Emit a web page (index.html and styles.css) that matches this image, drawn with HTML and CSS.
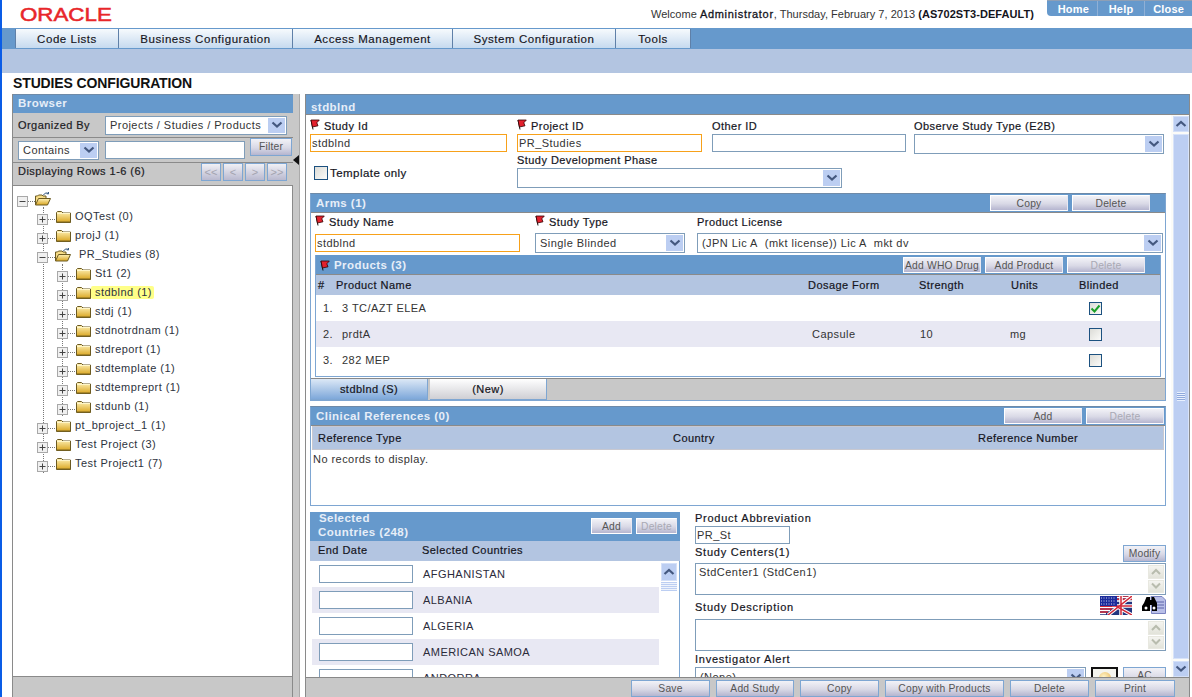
FILE: index.html
```html
<!DOCTYPE html>
<html lang="en">
<head>
<meta charset="utf-8">
<title>Studies Configuration</title>
<link rel="stylesheet" href="styles.css">
</head>
<body>
<svg class="defs" width="0" height="0" aria-hidden="true">
  <defs>
    <linearGradient id="fold" x1="0" y1="0" x2="0" y2="1"><stop offset="0" stop-color="#fff2b8"/><stop offset="1" stop-color="#d9a520"/></linearGradient>
    <symbol id="folder" viewBox="0 0 15 12"><path d="M.5 11.500V1.500l1-1h4l1.500 1.500h7.500v9.500z" fill="url(#fold)" stroke="#6b5a22"/><path d="M1 2.500h13" stroke="#fff6c8"/><path d="M1 11h13.500" stroke="#7b6420"/></symbol>
    <symbol id="folder-open" viewBox="0 0 16 14"><path d="M.5 13V4h2l1-1h3.500l1 1h3v3" fill="#f7dc86" stroke="#6b5a22"/><path d="M.5 13l3-6.500h12L12.500 13z" fill="url(#fold)" stroke="#6b5a22"/><path d="M8.500 3c1-2 3.500-2.700 5-1.300M13.500 0v1.800h-1.800" fill="none" stroke="#33577f"/></symbol>
    <symbol id="plus" viewBox="0 0 11 11"><rect x=".5" y=".5" width="10" height="10" fill="#f0f0f0" stroke="#a8a8a8"/><path d="M2.500 5.500h6M5.500 2.500v6" stroke="#444"/></symbol>
    <symbol id="minus" viewBox="0 0 11 11"><rect x=".5" y=".5" width="10" height="10" fill="#f0f0f0" stroke="#a8a8a8"/><path d="M2.500 5.500h6" stroke="#444"/></symbol>
    <symbol id="flag" viewBox="0 0 10 11"><path d="M1 1l2 9.500" stroke="#111" fill="none"/><path d="M1 1h8.300L6.800 3.800 8 6.800 2.400 8z" fill="#e3202c" stroke="#300" stroke-width=".8"/></symbol>
    <symbol id="chev" viewBox="0 0 12 8"><path d="M1.500 1.500L6 5.500l4.500-4" fill="none" stroke="#44587f" stroke-width="2.200"/></symbol>
    <symbol id="chev-up" viewBox="0 0 12 8"><path d="M1.500 6L6 2l4.500 4" fill="none" stroke="#44587f" stroke-width="2.200"/></symbol>
    <symbol id="chev-g" viewBox="0 0 12 8"><path d="M2 1.500L6 5.500l4-4" fill="none" stroke="#b8bcae" stroke-width="2"/></symbol>
    <symbol id="chev-g-up" viewBox="0 0 12 8"><path d="M2 6L6 2l4 4" fill="none" stroke="#b8bcae" stroke-width="2"/></symbol>
  </defs>
</svg>
<div class="page">
  <header class="masthead">
    <div class="logo"><span>ORACLE</span></div>
    <p class="welcome">Welcome <b>Administrator</b>, Thursday, February 7, 2013 <b class="tight">(AS702ST3-DEFAULT)</b></p>
    <nav class="util-tabs"><a>Home</a><a>Help</a><a>Close</a></nav>
  </header>
  <nav class="main-nav">
    <a class="w-code">Code Lists</a><a class="w-biz">Business Configuration</a><a class="w-acc">Access Management</a><a class="w-sys">System Configuration</a><a class="w-tools">Tools</a>
  </nav>
  <div class="sub-nav"></div>
  <h1 class="page-title">STUDIES CONFIGURATION</h1>
  <div class="workspace">
    <aside class="browser">
      <h2 class="bar">Browser</h2>
      <div class="tool-row r-org">
        <span class="label">Organized By</span>
        <span class="select s-org">Projects / Studies / Products<i class="drop"><svg width="12" height="8"><use href="#chev"/></svg></i></span>
      </div>
      <div class="tool-row r-filter">
        <span class="select s-contains">Contains<i class="drop"><svg width="12" height="8"><use href="#chev"/></svg></i></span>
        <span class="input i-filter"></span>
        <a class="btn b-filter">Filter</a>
      </div>
      <div class="tool-row r-pager">
        <span class="label">Displaying Rows 1-6 (6)</span>
        <span class="pager"><a>&lt;&lt;</a><a>&lt;</a><a>&gt;</a><a>&gt;&gt;</a></span>
      </div>
      <div class="tree">
        <div class="node root"><svg class="tg" width="11" height="11"><use href="#minus"/></svg><span class="dots"></span><svg class="fo" width="16" height="14"><use href="#folder-open"/></svg></div>
        <ul class="branch b1">
          <li class="node"><svg class="tg" width="11" height="11"><use href="#plus"/></svg><span class="dots"></span><svg width="15" height="12"><use href="#folder"/></svg><span class="nm">OQTest (0)</span></li>
          <li class="node"><svg class="tg" width="11" height="11"><use href="#plus"/></svg><span class="dots"></span><svg width="15" height="12"><use href="#folder"/></svg><span class="nm">projJ (1)</span></li>
          <li class="node"><svg class="tg" width="11" height="11"><use href="#minus"/></svg><span class="dots"></span><svg class="fo" width="16" height="14"><use href="#folder-open"/></svg><span class="nm open">PR_Studies (8)</span></li>
          <li>
            <ul class="branch b2">
              <li class="node"><svg class="tg" width="11" height="11"><use href="#plus"/></svg><span class="dots"></span><svg width="15" height="12"><use href="#folder"/></svg><span class="nm">St1 (2)</span></li>
              <li class="node"><svg class="tg" width="11" height="11"><use href="#plus"/></svg><span class="dots"></span><svg width="15" height="12"><use href="#folder"/></svg><span class="nm current">stdblnd (1)</span></li>
              <li class="node"><svg class="tg" width="11" height="11"><use href="#plus"/></svg><span class="dots"></span><svg width="15" height="12"><use href="#folder"/></svg><span class="nm">stdj (1)</span></li>
              <li class="node"><svg class="tg" width="11" height="11"><use href="#plus"/></svg><span class="dots"></span><svg width="15" height="12"><use href="#folder"/></svg><span class="nm">stdnotrdnam (1)</span></li>
              <li class="node"><svg class="tg" width="11" height="11"><use href="#plus"/></svg><span class="dots"></span><svg width="15" height="12"><use href="#folder"/></svg><span class="nm">stdreport (1)</span></li>
              <li class="node"><svg class="tg" width="11" height="11"><use href="#plus"/></svg><span class="dots"></span><svg width="15" height="12"><use href="#folder"/></svg><span class="nm">stdtemplate (1)</span></li>
              <li class="node"><svg class="tg" width="11" height="11"><use href="#plus"/></svg><span class="dots"></span><svg width="15" height="12"><use href="#folder"/></svg><span class="nm">stdtempreprt (1)</span></li>
              <li class="node"><svg class="tg" width="11" height="11"><use href="#plus"/></svg><span class="dots"></span><svg width="15" height="12"><use href="#folder"/></svg><span class="nm">stdunb (1)</span></li>
            </ul>
          </li>
          <li class="node"><svg class="tg" width="11" height="11"><use href="#plus"/></svg><span class="dots"></span><svg width="15" height="12"><use href="#folder"/></svg><span class="nm">pt_bproject_1 (1)</span></li>
          <li class="node"><svg class="tg" width="11" height="11"><use href="#plus"/></svg><span class="dots"></span><svg width="15" height="12"><use href="#folder"/></svg><span class="nm">Test Project (3)</span></li>
          <li class="node"><svg class="tg" width="11" height="11"><use href="#plus"/></svg><span class="dots"></span><svg width="15" height="12"><use href="#folder"/></svg><span class="nm">Test Project1 (7)</span></li>
        </ul>
      </div>
      <div class="browser-foot"></div>
    </aside>
    <div class="splitter"><i class="collapse"></i></div>
    <main class="detail">
      <h2 class="bar bar-detail">stdblnd</h2>
      <div class="detail-body">
        <div class="scroll-pane">
          <div class="fields-1">
            <div class="field"><label class="fl"><svg width="10" height="11"><use href="#flag"/></svg>Study Id</label><span class="input req w197">stdblnd</span></div>
            <div class="field"><label class="fl"><svg width="10" height="11"><use href="#flag"/></svg>Project ID</label><span class="input req w185">PR_Studies</span></div>
            <div class="field"><label class="fl">Other ID</label><span class="input w194"></span></div>
            <div class="field"><label class="fl">Observe Study Type (E2B)</label><span class="select w250"><i class="drop"><svg width="12" height="8"><use href="#chev"/></svg></i></span></div>
          </div>
          <div class="fields-2">
            <label class="tpl"><span class="check"></span>Template only</label>
            <div class="field"><label class="fl">Study Development Phase</label><span class="select w325"><i class="drop"><svg width="12" height="8"><use href="#chev"/></svg></i></span></div>
          </div>

          <section class="arms">
            <div class="bar bar-btn"><span>Arms (1)</span><span class="btns"><a class="btn on-bar w78">Copy</a><a class="btn on-bar w78">Delete</a></span></div>
            <div class="arm-fields">
              <div class="field f-name"><label class="fl"><svg width="10" height="11"><use href="#flag"/></svg>Study Name</label><span class="input req w205">stdblnd</span></div>
              <div class="field f-type"><label class="fl"><svg width="10" height="11"><use href="#flag"/></svg>Study Type</label><span class="select w150 up1">Single Blinded<i class="drop"><svg width="12" height="8"><use href="#chev"/></svg></i></span></div>
              <div class="field"><label class="fl">Product License</label><span class="select w466 up1">(JPN Lic A&nbsp; (mkt license)) Lic A&nbsp; mkt dv<i class="drop"><svg width="12" height="8"><use href="#chev"/></svg></i></span></div>
            </div>
            <section class="products">
              <div class="bar bar-btn bar-prod"><span class="with-flag"><svg width="10" height="11"><use href="#flag"/></svg>Products (3)</span><span class="btns"><a class="btn on-bar w78">Add WHO Drug</a><a class="btn on-bar w78">Add Product</a><a class="btn on-bar w78 off">Delete</a></span></div>
              <div class="prod-row prod-head"><span>#</span><span>Product Name</span><span>Dosage Form</span><span>Strength</span><span>Units</span><span>Blinded</span></div>
              <div class="prod-row"><span class="c-n">1.</span><span class="c-name">3 TC/AZT ELEA</span><span></span><span></span><span></span><span class="c-ck"><span class="check sm"><svg width="11" height="9" viewBox="0 0 11 9"><path d="M1.500 4.500l3 3 5-6" fill="none" stroke="#1aa028" stroke-width="2"/></svg></span></span></div>
              <div class="prod-row alt"><span class="c-n">2.</span><span class="c-name">prdtA</span><span class="c-form">Capsule</span><span class="c-str">10</span><span class="c-unit">mg</span><span class="c-ck"><span class="check sm"></span></span></div>
              <div class="prod-row"><span class="c-n">3.</span><span class="c-name">282 MEP</span><span></span><span></span><span></span><span class="c-ck"><span class="check sm"></span></span></div>
            </section>
            <div class="arm-tabs"><a class="arm-tab active">stdblnd (S)</a><a class="arm-tab">(New)</a></div>
          </section>

          <section class="clinical">
            <div class="bar bar-btn"><span>Clinical References (0)</span><span class="btns"><a class="btn on-bar w78">Add</a><a class="btn on-bar w78 off">Delete</a></span></div>
            <div class="ref-head"><span>Reference Type</span><span>Country</span><span>Reference Number</span></div>
            <p class="empty">No records to display.</p>
          </section>

          <div class="lower">
            <section class="countries">
              <div class="bar bar-countries"><span class="two-line"><span class="first-line">Selected</span><br>Countries (248)</span><span class="btns"><a class="btn on-bar w41">Add</a><a class="btn on-bar w41 off">Delete</a></span></div>
              <div class="c-head"><span>End Date</span><span>Selected Countries</span></div>
              <div class="c-body">
                <div class="c-rows">
                  <div class="c-row"><span class="input w94"></span><span>AFGHANISTAN</span></div>
                  <div class="c-row alt"><span class="input w94"></span><span>ALBANIA</span></div>
                  <div class="c-row"><span class="input w94"></span><span>ALGERIA</span></div>
                  <div class="c-row alt"><span class="input w94"></span><span>AMERICAN SAMOA</span></div>
                  <div class="c-row"><span class="input w94"></span><span>ANDORRA</span></div>
                </div>
                <div class="mini-scroll"><i class="sb-btn"><svg width="12" height="8"><use href="#chev-up"/></svg></i><i class="mini-thumb"></i></div>
              </div>
            </section>
            <section class="abbr">
              <label class="lab">Product Abbreviation</label>
              <span class="input w95">PR_St</span>
              <div class="lab-row lr-center"><label class="lab">Study Centers(1)</label><a class="btn framed b-modify">Modify</a></div>
              <div class="area">StdCenter1 (StdCen1)<span class="area-sb"><i><svg width="12" height="8"><use href="#chev-g-up"/></svg></i><i><svg width="12" height="8"><use href="#chev-g"/></svg></i></span></div>
              <div class="lab-row lr-desc"><label class="lab">Study Description</label>
                <span class="desc-icons">
                  <svg width="32" height="19" viewBox="0 0 32 19"><rect width="32" height="19" fill="#22357f"/><path d="M16 1.500h16M16 5h16" stroke="#fff" stroke-width="1.500"/><path d="M16 0h16v1M16 3.200h16" stroke="#d02838" stroke-width="1.500" fill="none"/><path d="M0 11.500h14M0 14.500h10M0 17.500h6" stroke="#fff" stroke-width="1.500"/><path d="M0 10.200h32M0 13h12M0 16h8" stroke="#d02838" stroke-width="1.400"/><path d="M8 19L32 0M14 9L32 19M21 0v19M12 10h20" stroke="#fff" stroke-width="3.500"/><path d="M8 19L32 0M14 9L32 19M21 0v19M12 10h20" stroke="#d02838" stroke-width="1.500"/><rect width="17" height="10" fill="#1c2c9c"/><path d="M1 2h15M1 5h15M1 8h15" stroke="#fff" stroke-width=".8" stroke-dasharray="1 1.500"/></svg>
                  <svg width="24" height="18" viewBox="0 0 24 18"><path d="M9 .5h11l3.500 3.500v13.500h-14z" fill="#b9bfe8" stroke="#7a82c0"/><path d="M14 6h8M14 9h8M14 12h8" stroke="#5a62a8"/><path d="M2 7L4.500 1h3.500v3h1.500V1h2.500L15 7v8h-5V9H8v6H0V10z" fill="#000"/><circle cx="4" cy="12" r="1.500" fill="#fff"/><circle cx="12" cy="12" r="1.500" fill="#fff"/></svg>
                </span>
              </div>
              <div class="area">
                <span class="area-sb"><i><svg width="12" height="8"><use href="#chev-g-up"/></svg></i><i><svg width="12" height="8"><use href="#chev-g"/></svg></i></span>
              </div>
              <label class="lab lab-inv">Investigator Alert</label>
              <div class="inv-row">
                <span class="select w391">(None)<i class="drop"><svg width="12" height="8"><use href="#chev"/></svg></i></span>
                <span class="orb"><i></i></span>
                <a class="btn framed b-ac">AC</a>
              </div>
            </section>
          </div>
        </div>
        <div class="v-scroll">
          <i class="sb-btn big"><svg width="12" height="8"><use href="#chev-up"/></svg></i>
          <i class="sb-thumb"><b></b></i>
          <i class="sb-btn big"><svg width="12" height="8"><use href="#chev"/></svg></i>
        </div>
      </div>
      <footer class="actions">
        <a class="btn framed w79">Save</a><a class="btn framed w78">Add Study</a><a class="btn framed w79">Copy</a><a class="btn framed w119">Copy with Products</a><a class="btn framed w79">Delete</a><a class="btn framed w80">Print</a>
      </footer>
    </main>
  </div>
</div>
</body>
</html>
```
FILE: styles.css
```css
* { box-sizing: border-box; }
html, body { margin: 0; padding: 0; height: 100%; overflow: hidden; background: #fff; }
body { font: 11px/13px "Liberation Sans", Arial, sans-serif; color: #2c2c34; letter-spacing: .45px; }
.defs { position: absolute; }
a { display: block; }
i { display: block; font-style: normal; }
h1, h2, p, ul { margin: 0; padding: 0; }
ul { list-style: none; }

.page { width: 1192px; height: 697px; border-left: 2px solid #0a5ce6; display: flex; flex-direction: column; overflow: hidden; }

/* masthead */
.masthead { height: 28px; flex: none; display: flex; padding-left: 18px; }
.logo { flex: none; width: 92px; padding-top: 5px; }
.logo span { display: block; width: 74px; font-size: 18px; line-height: 20px; letter-spacing: 0; color: #e8262a; -webkit-text-stroke: .5px #e8262a; transform: scaleX(1.24); transform-origin: 0 0; white-space: nowrap; }
.welcome { margin-left: 539px; width: 396px; white-space: nowrap; padding-top: 8px; color: #333; letter-spacing: .02px; }
.welcome b { color: #14141c; font-weight: 400; -webkit-text-stroke: .3px #14141c; letter-spacing: .7px; }
.welcome b.tight { letter-spacing: .05px; font-weight: 700; -webkit-text-stroke: 0; }
.util-tabs { width: 145px; height: 16px; display: flex; background: #6699cc; border-top: 1px solid #8e9fb5; border-bottom-left-radius: 4px; }
.util-tabs a { flex: 1; color: #fff; font-weight: 700; text-align: center; line-height: 17px; border-left: 1px solid #8fb0d6; letter-spacing: .2px; }
.util-tabs a:first-child { border-left: 0; padding-left: 3px; }

/* nav */
.main-nav { height: 21px; flex: none; background: #6699cc; display: flex; padding: 1px 0 0 13px; }
.main-nav a { height: 19px; background: linear-gradient(#f6fafd, #c6daef); border-right: 1px solid #5f80a8; border-left: 1px solid #5f80a8; margin-right: -1px; text-align: center; line-height: 20px; font-size: 11.500px; color: #14141c; letter-spacing: .55px; -webkit-text-stroke: .15px #14141c; }
.w-code { width: 104px; }
.w-biz { width: 175px; }
.w-acc { width: 161px; }
.w-sys { width: 164px; }
.w-tools { width: 76px; }
.sub-nav { height: 24px; flex: none; background: #b3c5e1; }
.page-title { height: 21px; flex: none; padding: 2px 0 0 11px; font-size: 14px; line-height: 16px; letter-spacing: -.13px; color: #111; }

/* workspace */
.workspace { flex: 1; display: flex; padding-left: 10px; min-height: 0; }
.browser { width: 281px; flex: none; border-left: 1px solid #8a8a8a; display: flex; flex-direction: column; background: #c8c8c8; }
.bar { background: #6699cc; color: #e6eef8; font-size: 11.500px; font-weight: 700; }
.browser > .bar { height: 19px; line-height: 17px; padding-left: 5px; border-top: 1px solid #6e8aa8; }
.tool-row { display: flex; align-items: center; border-bottom: 1px solid #8a8a8a; }
.r-org { height: 25px; padding-left: 5px; }
.r-org .label { width: 87px; }
.r-filter { height: 25px; padding-left: 5px; }
.r-pager { height: 23px; padding: 0 6px 0 5px; justify-content: space-between; align-items: flex-start; padding-top: 2px; }
.label { color: #1c1c24; -webkit-text-stroke: .2px #1c1c24; }
.select, .input { display: block; height: 18px; background: #fff; border: 1px solid #7f9db9; line-height: 16px; white-space: nowrap; overflow: hidden; color: #333; padding-left: 1px; flex: none; }
.select { position: relative; padding-left: 4px; height: 20px; line-height: 18px; }
.up1 { margin-top: -1px; }
.drop { position: absolute; right: 1px; top: 1px; bottom: 1px; width: 17px; background: #bccef2; display: flex; align-items: center; justify-content: center; }
.s-org { width: 182px; height: 19px; line-height: 17px; }
.s-contains { width: 81px; height: 19px; line-height: 17px; }
.i-filter { width: 140px; margin-left: 6px; }
.btn { height: 16px; line-height: 15px; text-align: center; color: #555; background: linear-gradient(#f2f2f7 0, #d9d9e6 55%, #b5b5cf 100%); white-space: nowrap; flex: none; letter-spacing: .2px; font-size: 10.300px; font-weight: 400; }
.on-bar { border: 1px solid #fff; border-right-color: #e9e9f2; }
.off { color: #a9a9b4; }
.framed { border: 1px solid #7ea6d2; }
.b-filter { width: 42px; margin: -7px -1px 0 5px; border: 1px solid #7ea6d2; height: 18px; }
.pager { display: flex; gap: 2px; margin-top: -2px; }
.pager a { width: 20px; height: 18px; line-height: 16px; border: 1px solid #7ea6d2; text-align: center; background: linear-gradient(#f0f0f5, #b9b9cf); color: #a4a4b0; letter-spacing: 0; }

/* tree */
.tree { flex: 1; background: #fff; border-right: 1px solid #8a8a8a; padding: 4px 0 0 4px; overflow: hidden; min-height: 0; }
.node { height: 19px; display: flex; align-items: center; }
.root { height: 17px; }
.tg { flex: none; margin-top: 6px; }
.dots { width: 7px; border-top: 1px dotted #777; flex: none; margin: 5px 1px 0 0; }
.fo { margin-left: -1px; flex: none; }
.nm { margin-left: 3px; padding: 0 1px; line-height: 13px; white-space: nowrap; color: #2d3340; }
.nm.open { margin-left: 7px; }
.current { background: #ffff88; margin-left: 0; padding: 0 2px 0 4px; border-radius: 2px; }
.branch { border-left: 1px dotted #777; }
.b1 { margin-left: 26px; }
.b1 > .node > .tg { margin-left: -7px; }
.b1 > li > .b2 { margin-left: 18px; }
.b2 > .node > .tg { margin-left: -6px; }
.browser-foot { height: 21px; flex: none; border-top: 1px solid #8a8a8a; border-right: 1px solid #8a8a8a; }

/* splitter */
.splitter { width: 7px; flex: none; background: #c8c8c8; padding-top: 61px; border-right: 1px solid #aaa; margin-right: 5px; }
.collapse { width: 0; height: 0; border-style: solid; border-width: 5px 6px 5px 0; border-color: transparent #111 transparent transparent; }

/* detail */
.detail { width: 885px; flex: none; display: flex; flex-direction: column; border-left: 1px solid #8a8a8a; border-right: 1px solid #8a8a8a; }
.bar-detail { height: 21px; line-height: 24px; padding-left: 5px; border-top: 1px solid #6e8aa8; border-bottom: 1px solid #8a8a8a; }
.detail-body { flex: 1; display: flex; min-height: 0; background: #fbfbf8; }
.scroll-pane { width: 865px; flex: none; overflow: hidden; padding: 5px 0 0 4px; background: #fff; }
.fields-1 { display: grid; grid-template-columns: 207px 195px 202px 250px; height: 34px; }
.fields-2 { display: grid; grid-template-columns: 207px 1fr; height: 39px; }
.fl { display: flex; align-items: flex-start; height: 14px; gap: 4px; color: #15151d; -webkit-text-stroke: .2px #15151d; }
.fl svg { flex: none; margin-top: -1px; }
.tpl { display: flex; align-items: center; gap: 2px; height: 16px; margin: 11px 0 0 4px; color: #15151d; -webkit-text-stroke: .2px #15151d; font-size: 11.500px; }
.check { display: flex; align-items: center; justify-content: center; width: 14px; height: 14px; border: 1px solid #1c5180; background: linear-gradient(135deg, #dcdcd7, #fbfbf9); flex: none; }
.check.sm { width: 13px; height: 13px; }
.req { border-color: #f7a11a; }
.w197 { width: 197px; } .w185 { width: 185px; } .w194 { width: 194px; } .w250 { width: 250px; }
.w325 { width: 325px; } .w205 { width: 205px; } .w150 { width: 150px; } .w466 { width: 466px; }
.w94 { width: 94px; } .w95 { width: 95px; } .w391 { width: 391px; }
.w78 { width: 78px; } .w41 { width: 41px; } .w80 { width: 80px; } .w79 { width: 79px; } .w119 { width: 119px; }

/* arms */
.arms { border: 1px solid #7ea6d2; border-top-color: #6e8aa8; width: 856px; height: 208px; }
.bar-btn { display: flex; justify-content: space-between; align-items: center; height: 19px; padding-left: 5px; border-bottom: 1px solid #8a8a8a; }
.btns { display: flex; gap: 4px; }
.arms > .bar-btn .btns { margin-right: 15px; }
.arm-fields { display: flex; height: 42px; padding: 3px 0 0 4px; }
.arm-fields .fl { height: 18px; }
.f-name { width: 220px; }
.f-type { width: 162px; }
.products { margin-left: 4px; width: 846px; height: 122px; border: 1px solid #7ea6d2; border-top: 0; }
.bar-prod { height: 20px; padding-left: 4px; }
.bar-prod .btns { margin-right: 15px; }
.with-flag { display: flex; gap: 4px; align-items: center; padding-top: 1px; }
.prod-row { display: grid; grid-template-columns: 18px 472px 111px 92px 68px 1fr; height: 26px; align-items: center; color: #333; }
.prod-head { height: 20px; background: #b3c5e1; color: #15151d; -webkit-text-stroke: .2px #15151d; padding-left: 2px; }
.prod-row:not(.prod-head) { padding-left: 2px; }
.alt { background: #e8e8f3; }
.c-n { padding-left: 5px; }
.c-name { padding-left: 6px; }
.c-form { padding-left: 4px; }
.c-str { padding-left: 1px; }
.c-unit { margin-left: -1px; }
.c-ck { display: block; padding-left: 10px; }
.arm-tabs { display: flex; gap: 2px; height: 22px; margin-top: 1px; background: #c8c8c8; border-top: 1px solid #888; }
.arm-tab { width: 117px; text-align: center; color: #15151d; line-height: 20px; background: linear-gradient(#fff, #cfcfd4); -webkit-text-stroke: .2px #15151d; border-right: 1px solid #7ea6d2; border-bottom: 1px solid #7ea6d2; }
.arm-tab.active { background: linear-gradient(#dce8f6, #7ea8da); }

/* clinical */
.clinical { margin-top: 5px; width: 856px; height: 100px; border: 1px solid #7ea6d2; border-top-color: #6e8aa8; }
.clinical .btns { margin-right: 1px; }
.ref-head { display: grid; grid-template-columns: 355px 305px 1fr; height: 24px; margin: 0 1px; padding-left: 5px; align-items: center; background: #b3c5e1; border: 1px solid #c8c8d0; color: #15151d; -webkit-text-stroke: .2px #15151d; }
.empty { padding: 3px 0 0 2px; color: #333; }

/* lower */
.lower { display: grid; grid-template-columns: 370px 471px; gap: 15px; margin-top: 6px; }
.bar-countries { height: 29px; display: flex; justify-content: space-between; padding: 0 3px 0 8px; }
.two-line { line-height: 14px; margin-top: -1px; }
.first-line { margin-left: 1px; }
.bar-countries .btns { margin-top: 6px; }
.c-head { display: grid; grid-template-columns: 104px 1fr; height: 20px; padding: 0 0 2px 8px; align-items: center; background: #b3c5e1; color: #15151d; -webkit-text-stroke: .2px #15151d; }
.c-body { display: flex; height: 150px; border-right: 1px solid #7ea6d2; }
.c-rows { width: 347px; margin-left: 2px; }
.c-row { display: flex; align-items: center; gap: 10px; height: 26px; padding-left: 7px; color: #2b2b3a; }
.mini-scroll { width: 16px; margin: 2px 0 0 2px; }
.sb-btn { height: 18px; background: #bccef2; border: 1px solid #d4e0f8; display: flex; align-items: center; justify-content: center; }
.mini-thumb { height: 9px; margin-top: 1px; background: repeating-linear-gradient(#bccef2 0 1px, #eef3fc 1px 2px); }
.abbr { display: block; }
.lab { display: block; height: 14px; color: #15151d; -webkit-text-stroke: .2px #15151d; letter-spacing: .75px; }
.lab-row { display: flex; justify-content: space-between; align-items: flex-end; height: 19px; width: 471px; }
.lr-center .lab { height: 13px; margin-bottom: 4px; }
.b-modify { width: 43px; height: 17px; margin-bottom: 1px; }
.area { position: relative; width: 471px; height: 32px; border: 1px solid #7f9db9; padding: 2px 3px; color: #333; background: #fff; }
.area-sb { position: absolute; top: 1px; right: 1px; bottom: 1px; width: 16px; display: flex; flex-direction: column; gap: 1px; }
.area-sb i { flex: 1; background: linear-gradient(#f4f4f0, #e2e3da); border: 1px solid #e8e8e0; display: flex; align-items: center; justify-content: center; }
.lr-desc { height: 24px; }
.lr-desc .lab { margin-bottom: 4px; }
.desc-icons { display: flex; gap: 10px; margin-bottom: 4px; }
.lab-inv { margin-top: 2px; height: 14px; }
.inv-row { display: flex; gap: 5px; }
.orb { width: 27px; height: 22px; border: 2px solid #111; display: flex; justify-content: center; padding-top: 3px; background: #f4f4ee; flex: none; }
.orb i { width: 12px; height: 14px; border-radius: 6px 6px 2px 2px; background: radial-gradient(circle at 40% 35%, #fff6cc, #e4a63a); }
.b-ac { width: 43px; height: 20px; }

/* main scrollbar */
.v-scroll { width: 18px; flex: none; margin-left: 1px; display: flex; flex-direction: column; padding: 1px 1px 0; gap: 2px; }
.sb-btn.big { height: 16px; }
.sb-thumb { flex: 1; background: #bccef2; border: 1px solid #d8e3f9; display: flex; align-items: center; justify-content: center; }
.sb-thumb b { display: block; width: 8px; height: 9px; background: repeating-linear-gradient(#e8f0fe 0 1px, #8fa9dc 1px 2px); }

/* footer */
.actions { height: 20px; flex: none; background: #c8c8c8; border-top: 1px solid #888; display: flex; gap: 6px; padding: 2px 0 0 325px; }
.actions .btn { height: 17px; }
```
